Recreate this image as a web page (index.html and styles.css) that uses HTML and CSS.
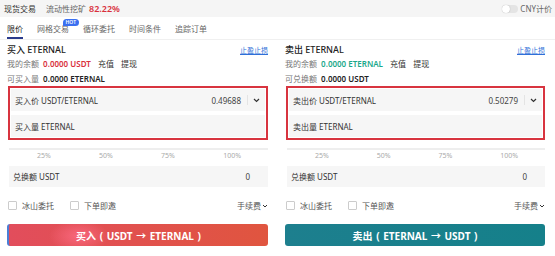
FILE: index.html
```html
<!DOCTYPE html>
<html lang="zh-CN">
<head>
  <meta charset="UTF-8">
  <meta name="viewport" content="width=device-width, initial-scale=1.0">
  <title>现货交易</title>
  <link rel="stylesheet" href="styles.css">
</head>
<body>
  <div class="topbar">
    <span class="top-item">现货交易</span>
    <span class="top-item muted">流动性挖矿</span>
    <span class="rate">82.22%</span>
    <div class="spacer"></div>
    <span class="toggle"></span>
    <span class="top-item muted">CNY计价</span>
  </div>

  <div class="tabs">
    <span class="tab active">限价</span>
    <span class="tab">网格交易<span class="hot">HOT</span></span>
    <span class="tab">循环委托</span>
    <span class="tab">时间条件</span>
    <span class="tab">追踪订单</span>
  </div>

  <div class="panels">
    <div class="panel">
      <div class="panel-head">
        <span class="panel-title">买入 ETERNAL</span>
        <a class="link" href="#">止盈止损</a>
      </div>
      <div class="info">我的余额 <b class="red">0.0000 USDT</b> <span class="act">充值</span> <span class="act">提现</span></div>
      <div class="info">可买入量 <b>0.0000 ETERNAL</b></div>

      <div class="input-box">
        <div class="field">
          <span>买入价 USDT/ETERNAL</span>
          <span class="value">0.49688</span>
          <span class="sep"></span>
          <svg class="chev" width="7" height="5" viewBox="0 0 7 5"><path d="M1 1l2.5 2.5L6 1" fill="none" stroke="#333" stroke-width="1.2"/></svg>
        </div>
        <div class="field">
          <span>买入量 ETERNAL</span>
        </div>
      </div>

      <div class="slider"></div>
      <div class="marks"><span>25%</span><span>50%</span><span>75%</span><span>100%</span></div>

      <div class="field total"><span>兑换额 USDT</span><span class="value">0</span></div>

      <div class="options">
        <label class="check"><span class="box"></span>冰山委托</label>
        <label class="check"><span class="box"></span>下单即邀</label>
        <span class="fee">手续费<svg width="6" height="4" viewBox="0 0 6 4"><path d="M1 1l2 2 2-2" fill="none" stroke="#333" stroke-width="1"/></svg></span>
      </div>

      <button class="btn buy">买入 ( USDT → ETERNAL )</button>
    </div>

    <div class="panel">
      <div class="panel-head">
        <span class="panel-title">卖出 ETERNAL</span>
        <a class="link" href="#">止盈止损</a>
      </div>
      <div class="info">我的余额 <b class="green">0.0000 ETERNAL</b> <span class="act">充值</span> <span class="act">提现</span></div>
      <div class="info">可兑换额 <b>0.0000 USDT</b></div>

      <div class="input-box">
        <div class="field">
          <span>卖出价 USDT/ETERNAL</span>
          <span class="value">0.50279</span>
          <span class="sep"></span>
          <svg class="chev" width="7" height="5" viewBox="0 0 7 5"><path d="M1 1l2.5 2.5L6 1" fill="none" stroke="#333" stroke-width="1.2"/></svg>
        </div>
        <div class="field">
          <span>卖出量 ETERNAL</span>
        </div>
      </div>

      <div class="slider"></div>
      <div class="marks"><span>25%</span><span>50%</span><span>75%</span><span>100%</span></div>

      <div class="field total"><span>兑换额 USDT</span><span class="value">0</span></div>

      <div class="options">
        <label class="check"><span class="box"></span>冰山委托</label>
        <label class="check"><span class="box"></span>下单即邀</label>
        <span class="fee">手续费<svg width="6" height="4" viewBox="0 0 6 4"><path d="M1 1l2 2 2-2" fill="none" stroke="#333" stroke-width="1"/></svg></span>
      </div>

      <button class="btn sell">卖出 ( ETERNAL → USDT )</button>
    </div>
  </div>
</body>
</html>
```

FILE: styles.css
```css
body {
  margin: 0;
  padding: 0;
  background: #fff;
  color: #222;
  font-family: "Noto Sans", "Noto Sans CJK SC", sans-serif;
  font-size: 8px;
  width: 555px;
  height: 256px;
  overflow: hidden;
}
.topbar {
  display: flex;
  align-items: center;
  height: 17px;
  padding: 0 3px 0 4px;
  background: #f5f5f5;
  gap: 10px;
}
.top-item {
  color: #333;
}
.muted {
  color: #666;
}
.rate {
  margin-left: -7px;
  color: #d9303c;
  font-size: 9px;
  font-weight: 600;
}
.spacer {
  flex: 1;
}
.toggle {
  width: 16px;
  height: 8px;
  border-radius: 4px;
  background: #e4e4e4;
  margin-right: -8px;
  position: relative;
}
.toggle::before {
  content: "";
  position: absolute;
  left: 0;
  top: 0;
  width: 8px;
  height: 8px;
  border-radius: 50%;
  background: #fff;
  box-shadow: 0 0 1px rgba(0, 0, 0, 0.3);
}
.tabs {
  display: flex;
  gap: 14px;
  padding: 5px 7px 0;
  height: 17px;
  border-bottom: 1px solid #f0f0f0;
}
.tab {
  position: relative;
  color: #666;
  line-height: 14px;
}
.tab.active {
  color: #222;
  border-bottom: 2px solid #2a3a8c;
  height: 15px;
}
.hot {
  position: absolute;
  top: -3px;
  right: -10px;
  background: #3a6ff0;
  color: #fff;
  font-size: 5px;
  font-weight: 600;
  line-height: 7px;
  padding: 0 3px;
  border-radius: 4px 4px 4px 0;
}
.panels {
  display: grid;
  grid-template-columns: 261px 260px;
  gap: 17px;
  padding: 0 0 0 7px;
}
.panel {
  display: flex;
  flex-direction: column;
}
.panel-head {
  display: flex;
  justify-content: space-between;
  align-items: center;
  margin-top: 3px;
  height: 13px;
}
.panel-title {
  font-size: 9px;
  color: #222;
  font-weight: 500;
}
.link {
  color: #2f6fd8;
  font-size: 7px;
  text-decoration: underline;
}
.info {
  color: #777;
  line-height: 14px;
  margin-top: 1px;
}
.info b {
  color: #222;
  font-weight: 600;
  margin-left: 2px;
}
.info .red {
  color: #d9303c;
}
.info .green {
  color: #1aa88a;
}
.act {
  color: #333;
  margin-left: 5px;
}
.input-box {
  margin: 0 0 0 1px;
  border: 2px solid #d8343f;
  padding: 1px;
  display: flex;
  flex-direction: column;
  gap: 4px;
}
.field {
  display: flex;
  align-items: center;
  height: 22px;
  padding: 0 4px;
  background: #f6f6f6;
  color: #333;
}
.value {
  margin-left: auto;
  color: #444;
}
.sep {
  width: 1px;
  height: 10px;
  background: #e4e4e4;
  margin: 0 5px 0 6px;
}
.chev {
  margin-right: 1px;
}
.slider {
  height: 2px;
  background: #eeeeee;
  margin: 8px 0 0 2px;
}
.marks {
  display: flex;
  justify-content: space-between;
  padding: 0 27px 0 30px;
  color: #aaa;
  font-size: 7px;
  line-height: 12px;
}
.field.total {
  margin: 4px 0 0 2px;
  height: 21px;
  padding-right: 18px;
}
.options {
  display: flex;
  align-items: center;
  gap: 16px;
  margin: 13px 0 0 1px;
  color: #555;
}
.check {
  display: flex;
  align-items: center;
  gap: 5px;
}
.box {
  width: 7px;
  height: 7px;
  border: 1px solid #ccc;
  border-radius: 1px;
}
.fee {
  margin-left: auto;
  display: flex;
  align-items: center;
  gap: 1px;
}
.btn {
  margin: 13px 0 0 0;
  height: 22px;
  border: none;
  border-radius: 3px;
  color: #fff;
  font-family: inherit;
  font-size: 10px;
  font-weight: 700;
  word-spacing: 1px;
}
.btn.buy {
  background: radial-gradient(ellipse 30px 16px at 70px 12px, rgba(255, 110, 135, 0.8), rgba(255, 110, 135, 0) 100%),
    linear-gradient(90deg, #e24d5c, #e0553f);
  border-left: 2px solid #4a7fd6;
}
.btn.sell {
  background: linear-gradient(90deg, #1d7f8e, #15808a);
}
```
